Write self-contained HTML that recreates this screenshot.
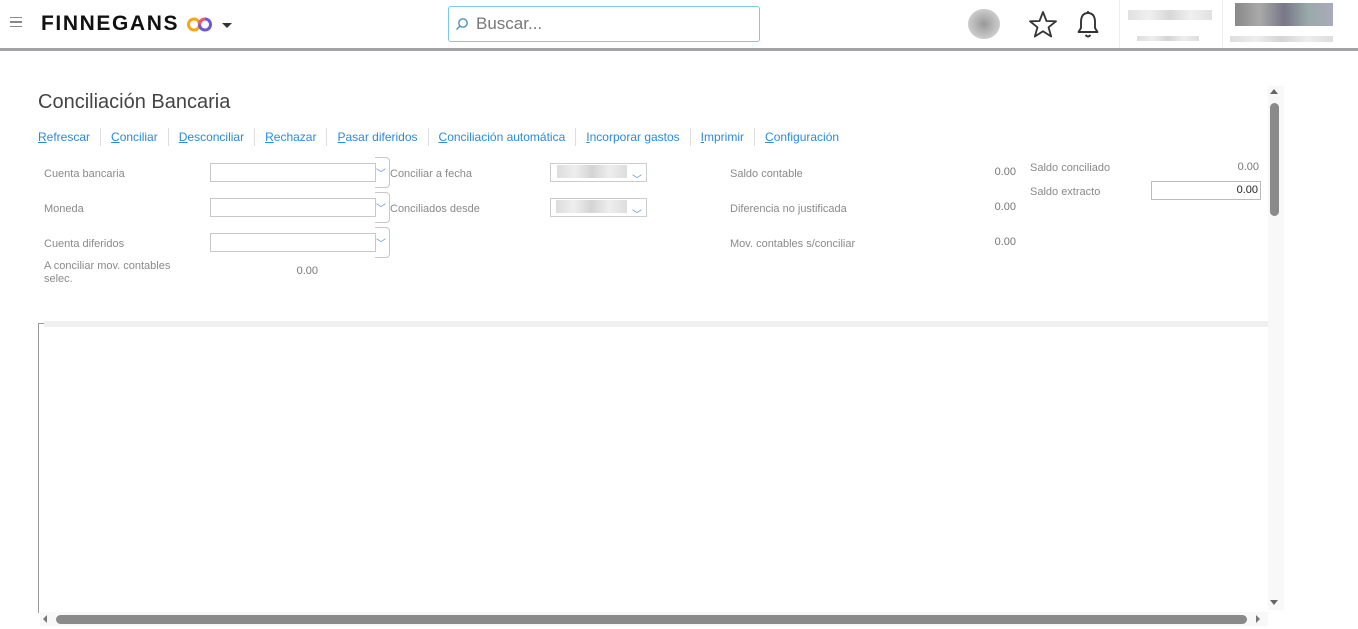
<!DOCTYPE html>
<html><head><meta charset="utf-8"><style>
*{box-sizing:border-box;margin:0;padding:0}
body{width:1358px;height:629px;overflow:hidden;background:#fff;font-family:"Liberation Sans",sans-serif;position:relative}
.a{position:absolute}
.hdr{left:0;top:0;width:1358px;height:51px;background:#fff;border-bottom:3px solid #a3a3a6}
.lbl{font-size:11px;color:#8a8a8a}
.val{font-size:11px;color:#777;text-align:right}
.sel{border:1px solid #c8c8c8;height:19px;width:166px}
.brk{border:1px solid #c8c8c8;border-left:none;border-radius:0 4px 4px 0;width:15px;height:31px}
.chev{font-size:10px;color:#5b8fd6}
.tb a{font-size:12px;color:#2a8ae0;text-decoration:none;padding:0 10px;border-right:1px solid #ddd;display:inline-block;line-height:18px}
.tb a:first-child{padding-left:0}
.tb a:last-child{border:none}
.tb u{text-decoration:underline}
.blur{background:linear-gradient(90deg,#ddd,#eee,#d4d4d4,#eee,#ddd)}
</style></head><body>
<div class="a hdr"></div>
<div class="a" style="left:10px;top:17px;width:12px;height:10px;border-top:1.5px solid #888;border-bottom:1.5px solid #888"></div>
<div class="a" style="left:10px;top:21px;width:12px;height:1.5px;background:#888"></div>
<div class="a" style="left:41px;top:12px;font-size:21px;font-weight:bold;letter-spacing:1.6px;color:#111">FINNEGANS</div>
<svg class="a" style="left:186px;top:16px" width="28" height="17"><circle cx="8" cy="8.5" r="5.5" fill="none" stroke="#f9a51a" stroke-width="3"/><circle cx="19" cy="8.5" r="5.5" fill="none" stroke="#6a5acd" stroke-width="3"/><path d="M13.6 8.5 A5.5 5.5 0 0 1 19 3" fill="none" stroke="#ee5a6b" stroke-width="3"/></svg>
<div class="a" style="left:222px;top:23px;width:0;height:0;border-left:5px solid transparent;border-right:5px solid transparent;border-top:5px solid #333"></div>
<div class="a" style="left:448px;top:6px;width:312px;height:36px;border:1px solid #7cc8e8;border-radius:3px"></div>
<svg class="a" style="left:455px;top:17px" width="14" height="14"><circle cx="8" cy="6" r="4.2" fill="none" stroke="#4a90c0" stroke-width="1.4"/><path d="M5 9 L1.5 12.5" stroke="#4a90c0" stroke-width="1.4"/></svg>
<div class="a" style="left:476px;top:14px;font-size:17px;color:#777">Buscar...</div>
<div class="a" style="left:968px;top:9px;width:32px;height:30px;border-radius:50%;background:radial-gradient(#999,#ccc 70%,#fff)"></div>
<svg class="a" style="left:1028px;top:10px" width="30" height="29"><path d="M15 2 L18.5 11 L28 11.3 L20.5 17.3 L23.2 26.5 L15 21.2 L6.8 26.5 L9.5 17.3 L2 11.3 L11.5 11 Z" fill="none" stroke="#333" stroke-width="1.8" stroke-linejoin="round"/></svg>
<svg class="a" style="left:1075px;top:10px" width="26" height="30"><path d="M13 3 C7.5 3 6 7.5 6 12 L6 18 L3.5 22 L22.5 22 L20 18 L20 12 C20 7.5 18.5 3 13 3 Z" fill="none" stroke="#333" stroke-width="1.9" stroke-linejoin="round"/><path d="M10.5 25 Q13 28 15.5 25" fill="none" stroke="#333" stroke-width="1.9"/><path d="M13 1 L13 3" stroke="#333" stroke-width="1.8"/></svg>
<div class="a" style="left:1119px;top:0;width:1px;height:48px;background:#eee"></div>
<div class="a" style="left:1222px;top:0;width:1px;height:48px;background:#eee"></div>
<div class="a blur" style="left:1128px;top:10px;width:84px;height:10px;opacity:.9"></div>
<div class="a blur" style="left:1137px;top:36px;width:62px;height:5px"></div>
<div class="a" style="left:1235px;top:3px;width:98px;height:23px;background:linear-gradient(90deg,#888,#aaa,#778,#9aa,#aab)"></div>
<div class="a blur" style="left:1230px;top:36px;width:103px;height:6px"></div>

<div class="a" style="left:38px;top:91px;font-size:20px;color:#444">Conciliación Bancaria</div>
<div class="a tb" style="left:38px;top:128px;white-space:nowrap"><a><u>R</u>efrescar</a><a><u>C</u>onciliar</a><a><u>D</u>esconciliar</a><a><u>R</u>echazar</a><a><u>P</u>asar diferidos</a><a><u>C</u>onciliación automática</a><a><u>I</u>ncorporar gastos</a><a><u>I</u>mprimir</a><a><u>C</u>onfiguración</a></div>

<div class="a lbl" style="left:44px;top:168px">Cuenta bancaria</div>
<div class="a lbl" style="left:44px;top:203px">Moneda</div>
<div class="a lbl" style="left:44px;top:238px">Cuenta diferidos</div>
<div class="a lbl" style="left:44px;top:260px;line-height:13px">A conciliar mov. contables<br>selec.</div>
<div class="a val" style="left:260px;top:265px;width:58px">0.00</div>
<div class="a sel" style="left:210px;top:163px"></div>
<div class="a sel" style="left:210px;top:198px"></div>
<div class="a sel" style="left:210px;top:233px"></div>
<div class="a brk" style="left:375px;top:157px"></div>
<div class="a brk" style="left:375px;top:192px"></div>
<div class="a brk" style="left:375px;top:227px"></div>
<div class="a chev" style="left:376px;top:165px">﹀</div>
<div class="a chev" style="left:376px;top:200px">﹀</div>
<div class="a chev" style="left:376px;top:235px">﹀</div>
<div class="a lbl" style="left:390px;top:168px">Conciliar a fecha</div>
<div class="a lbl" style="left:390px;top:203px">Conciliados desde</div>
<div class="a" style="left:550px;top:163px;width:97px;height:19px;border:1px solid #ccc"></div>
<div class="a" style="left:550px;top:198px;width:97px;height:19px;border:1px solid #ccc"></div>
<div class="a blur" style="left:557px;top:165px;width:70px;height:13px"></div>
<div class="a blur" style="left:556px;top:200px;width:71px;height:13px"></div>
<div class="a chev" style="left:632px;top:171px">﹀</div>
<div class="a chev" style="left:632px;top:206px">﹀</div>

<div class="a lbl" style="left:730px;top:168px">Saldo contable</div>
<div class="a lbl" style="left:730px;top:203px">Diferencia no justificada</div>
<div class="a lbl" style="left:730px;top:238px">Mov. contables s/conciliar</div>
<div class="a val" style="left:960px;top:166px;width:56px">0.00</div>
<div class="a val" style="left:960px;top:201px;width:56px">0.00</div>
<div class="a val" style="left:960px;top:236px;width:56px">0.00</div>
<div class="a lbl" style="left:1030px;top:162px">Saldo conciliado</div>
<div class="a lbl" style="left:1030px;top:186px">Saldo extracto</div>
<div class="a val" style="left:1200px;top:161px;width:59px">0.00</div>
<div class="a" style="left:1151px;top:181px;width:110px;height:19px;border:1px solid #bbb;font-size:11px;color:#222;text-align:right;padding:2px 2px 0 0">0.00</div>

<div class="a" style="left:1268px;top:86px;width:16px;height:524px;background:#f8f8f8"></div>
<div class="a" style="left:1270px;top:89px;width:0;height:0;border-left:4px solid transparent;border-right:4px solid transparent;border-bottom:5px solid #666"></div>
<div class="a" style="left:1270px;top:103px;width:9px;height:113px;background:#8a8a8a;border-radius:5px"></div>
<div class="a" style="left:1270px;top:600px;width:0;height:0;border-left:4px solid transparent;border-right:4px solid transparent;border-top:5px solid #666"></div>

<div class="a" style="left:38px;top:323px;width:1px;height:290px;background:#999"></div>
<div class="a" style="left:38px;top:323px;width:6px;height:1px;background:#999"></div>
<div class="a" style="left:44px;top:321px;width:1224px;height:6px;background:#f0f0f0"></div>
<div class="a" style="left:40px;top:612px;width:1228px;height:14px;background:#f8f8f8"></div>
<div class="a" style="left:43px;top:615px;width:0;height:0;border-top:4px solid transparent;border-bottom:4px solid transparent;border-right:4px solid #777"></div>
<div class="a" style="left:56px;top:615px;width:1191px;height:9px;background:#8a8a8a;border-radius:5px"></div>
<div class="a" style="left:1256px;top:615px;width:0;height:0;border-top:4px solid transparent;border-bottom:4px solid transparent;border-left:4px solid #777"></div>
</body></html>
